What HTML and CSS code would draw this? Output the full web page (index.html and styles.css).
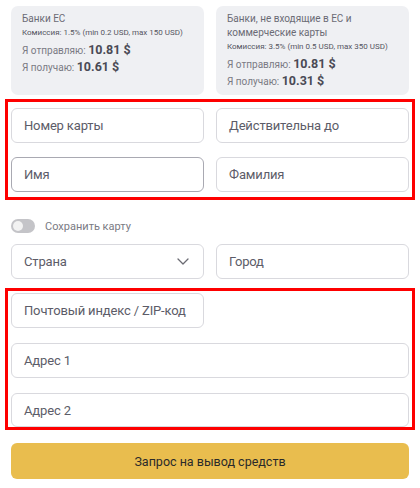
FILE: index.html
```html
<!DOCTYPE html>
<html lang="ru">
<head>
<meta charset="utf-8">
<link rel="stylesheet" href="styles.css">
</head>
<body>
<div class="page">
  <div class="cards">
    <div class="card">
      <div class="card-title">Банки ЕС</div>
      <div class="card-fee">Комиссия: 1.5% (min 0.2 USD, max 150 USD)</div>
      <div class="card-line first">Я отправляю: <b>10.81 $</b></div>
      <div class="card-line">Я получаю: <b>10.61 $</b></div>
    </div>
    <div class="card">
      <div class="card-title">Банки, не входящие в ЕС и коммерческие карты</div>
      <div class="card-fee">Комиссия: 3.5% (min 0.5 USD, max 350 USD)</div>
      <div class="card-line first">Я отправляю: <b>10.81 $</b></div>
      <div class="card-line">Я получаю: <b>10.31 $</b></div>
    </div>
  </div>

  <div class="mark mark-card">
    <div class="field">Номер карты</div>
    <div class="field">Действительна до</div>
    <div class="field field-focus">Имя</div>
    <div class="field">Фамилия</div>
  </div>

  <div class="save-row">
    <span class="toggle"><span class="knob"></span></span>
    <span class="save-label">Сохранить карту</span>
  </div>

  <div class="geo">
    <div class="field field-select">Страна
      <svg class="chev" width="12" height="7" viewBox="0 0 12 7"><path d="M1 1l5 5 5-5" fill="none" stroke="#6b6b73" stroke-width="1.3" stroke-linecap="round" stroke-linejoin="round"/></svg>
    </div>
    <div class="field">Город</div>
  </div>

  <div class="mark mark-addr">
    <div class="field">Почтовый индекс / ZIP-код</div>
    <div class="field wide">Адрес 1</div>
    <div class="field wide">Адрес 2</div>
  </div>

  <div class="submit-wrap">
    <button class="submit">Запрос на вывод средств</button>
  </div>
</div>
</body>
</html>
```
FILE: styles.css
```css
* { box-sizing: border-box; }
html, body { margin: 0; padding: 0; background: #fff; }
body { font-family: Roboto, "Noto Sans", sans-serif; color: #55555f; }
.page { padding: 6px 5px 0 5px; width: 420px; }

.cards { display: grid; grid-template-columns: 193px 193px; column-gap: 12px; padding: 0 6px; }
.card { background: #eff0f3; border-radius: 7px; height: 89px; padding: 6px 11px 0 11px; }
.card-title { font-size: 10px; line-height: 14px; color: #6b6b75; }
.card-fee { font-size: 8px; line-height: 12px; color: #55555f; margin-top: 1px; }
.card-line { font-size: 10px; line-height: 16px; color: #7a7a83; }
.card-line.first { margin-top: 3px; }
.card-line b { font-size: 12.5px; line-height: 16px; font-weight: 700; color: #4a4a55; }

.mark { border: 3px solid #fe0000; }
.mark-card { margin-top: 4px; display: grid; grid-template-columns: 193px 193px; column-gap: 12px; row-gap: 14px; padding: 6px 3px 5px 3px; }

.field { height: 35px; border: 1px solid #d9d9de; border-radius: 6px; font-size: 13px; letter-spacing: -0.15px; color: #5c5c68; display: flex; align-items: center; padding: 0 12px; background: #fff; white-space: nowrap; }
.field-focus { border-color: #a9a9b2; }

.save-row { display: flex; align-items: center; padding: 0 6px; margin-top: 19px; height: 14px; }
.toggle { width: 24px; height: 14px; border-radius: 7px; background: #c4c4c8; position: relative; display: inline-block; }
.knob { position: absolute; left: 2px; top: 2px; width: 10px; height: 10px; border-radius: 50%; background: #f2f2f2; }
.save-label { font-size: 11px; color: #7a7a83; margin-left: 10px; }

.geo { display: grid; grid-template-columns: 193px 193px; column-gap: 12px; padding: 0 6px; margin-top: 11px; }
.field-select { justify-content: space-between; padding-right: 14px; }
.chev { display: block; }

.mark-addr { margin-top: 9px; display: grid; grid-template-columns: 193px 193px; column-gap: 12px; row-gap: 15px; padding: 2px 3px 0 3px; }
.wide { grid-column: 1 / 3; }
.mark-addr .field:last-child { height: 34px; }

.submit-wrap { padding: 0 6px; margin-top: 13px; }
.submit { width: 100%; height: 36px; border: none; border-radius: 6px; background: #e9bd4e; font-family: Roboto, "Noto Sans", sans-serif; font-size: 12.5px; color: #2a2a2a; }
```
